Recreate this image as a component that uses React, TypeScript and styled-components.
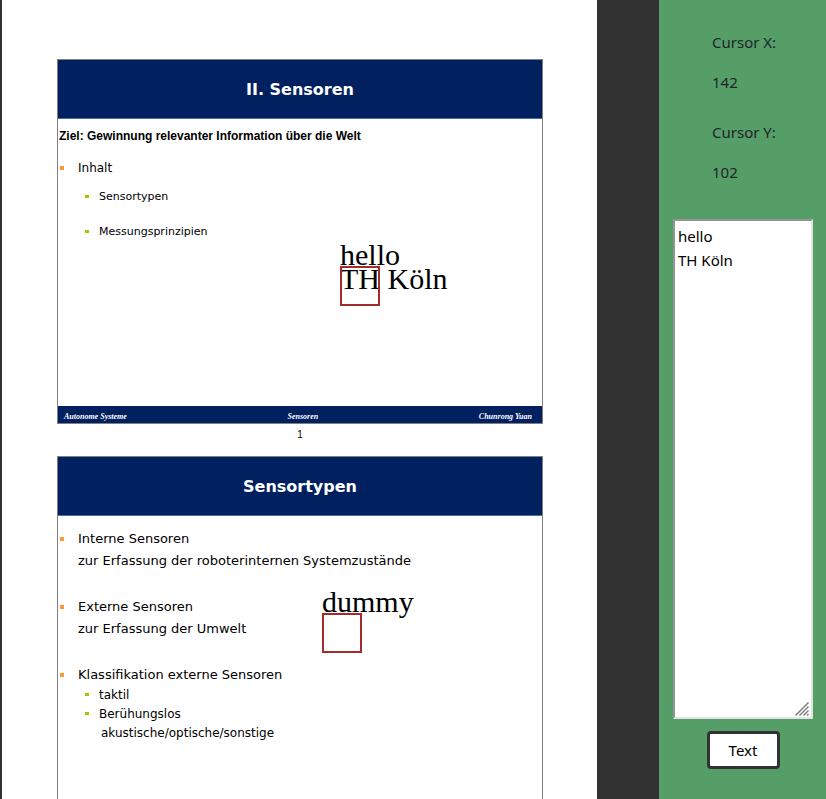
import React, { useState } from "react";
import styled, { createGlobalStyle } from "styled-components";

const GlobalStyle = createGlobalStyle`
  * { box-sizing: border-box; }
  body { margin: 0; background: #323232; }
  p, h1, h2, ul { margin: 0; padding: 0; }
`;

const uiFont = `"Noto Sans", "Open Sans", sans-serif`;
const slideFont = `"DejaVu Sans", Verdana, sans-serif`;

const Shell = styled.div`
  display: flex;
  height: 100vh;
  overflow: hidden;
  background: #323232;
`;

const Viewer = styled.main`
  flex: 1;
  min-width: 0;
  overflow: hidden;
  padding-left: 2px;
`;

const Sheet = styled.article`
  position: relative;
  width: 595px;
  min-height: 842px;
  padding: 59px 54px 0 55px;
  background: #ffffff;
  color: #000000;
`;

const Slide = styled.section`
  display: flex;
  flex-direction: column;
  height: 365px;
  border: 1px solid #808080;
  font-family: ${slideFont};
`;

const SlideTitle = styled.h2`
  display: flex;
  align-items: center;
  justify-content: center;
  height: 59px;
  flex: none;
  padding-top: 2px;
  border-bottom: 1px solid #4a6f9c;
  background: #00205f;
  color: #ffffff;
  font-size: 16px;
  line-height: 20px;
  font-weight: bold;
`;

const Goal = styled.p`
  padding: 8px 1px 0;
  font: bold 12px/18px "Liberation Sans", Arial, sans-serif;
`;

const List = styled.ul<{ $top: number }>`
  display: flex;
  flex-direction: column;
  padding-top: ${(p) => p.$top}px;
  list-style: none;
`;

const Item = styled.li<{ $level: 1 | 2; $size: number; $line: number; $gap?: number }>`
  display: grid;
  grid-template-columns: ${(p) => (p.$level === 1 ? 18 : 14)}px 1fr;
  margin-left: ${(p) => (p.$level === 1 ? 2 : 27)}px;
  margin-top: ${(p) => p.$gap ?? 0}px;
  font-size: ${(p) => p.$size}px;
  line-height: ${(p) => p.$line}px;
  white-space: nowrap;

  &::before {
    content: "";
    width: 4px;
    height: ${(p) => (p.$level === 1 ? 4 : 3)}px;
    margin-top: ${(p) => Math.floor(p.$line / 2) - 2}px;
    background: ${(p) => (p.$level === 1 ? "#ff9933" : "#99cc00")};
  }
`;

const Continuation = styled.span`
  display: block;
  padding-left: 2px;
`;

const SlideFooter = styled.footer`
  display: flex;
  justify-content: space-between;
  align-items: center;
  height: 17px;
  margin-top: auto;
  padding: 4px 10px 0 6px;
  background: #00205f;
  color: #ffffff;
  font: italic bold 8px/12px "Liberation Serif", "Times New Roman", serif;
`;

const PageNumber = styled.p`
  height: 32px;
  padding-top: 5px;
  text-align: center;
  font: 10px/12px "Liberation Sans", Arial, sans-serif;
`;

const Note = styled.div<{ $x: number; $y: number }>`
  position: absolute;
  left: ${(p) => p.$x}px;
  top: ${(p) => p.$y}px;
  font: 30px/24px "Liberation Serif", "Times New Roman", serif;
  white-space: pre;
`;

const NoteHandle = styled.span`
  position: absolute;
  left: 0;
  top: 23px;
  width: 40px;
  height: 40px;
  border: 2px solid #a52a2a;
`;

const Sidebar = styled.aside`
  display: flex;
  flex-direction: column;
  width: 167px;
  flex: none;
  padding: 30px 13px 0 14px;
  background: #559e67;
  color: #212529;
  font: 15px/24px ${uiFont};
`;

const Readout = styled.div`
  display: flex;
  flex-direction: column;
  gap: 16px;
  margin: 0 0 26px 39px;
`;

const EditorWrap = styled.div`
  position: relative;
  display: flex;
  margin-top: 9px;
`;

const Editor = styled.textarea`
  width: 100%;
  height: 500px;
  padding: 3px;
  border: 2px solid;
  border-color: #949494 #e3e3e3 #e3e3e3 #949494;
  border-radius: 0;
  outline: none;
  resize: none;
  background: #ffffff;
  color: #000000;
  font: 15px/24px ${uiFont};
`;

const Grip = styled.svg`
  position: absolute;
  right: 2px;
  bottom: 2px;
  pointer-events: none;
`;

const ModeButton = styled.button`
  align-self: center;
  width: 73px;
  height: 38px;
  margin-top: 12px;
  padding: 0;
  border: 3px solid #323232;
  border-radius: 4px;
  background: #ffffff;
  color: #000000;
  font: 15px/24px ${uiFont};
`;

export default function App() {
  const [text, setText] = useState("hello\nTH Köln");

  return (
    <>
      <GlobalStyle />
      <Shell>
        <Viewer>
          <Sheet>
            <Slide>
              <SlideTitle>II. Sensoren</SlideTitle>
              <Goal>Ziel: Gewinnung relevanter Information über die Welt</Goal>
              <List $top={14}>
                <Item $level={1} $size={12} $line={18}>Inhalt</Item>
                <Item $level={2} $size={11} $line={16} $gap={12}>Sensortypen</Item>
                <Item $level={2} $size={11} $line={16} $gap={19}>Messungsprinzipien</Item>
              </List>
              <SlideFooter>
                <span>Autonome Systeme</span>
                <span>Sensoren</span>
                <span>Chunrong Yuan</span>
              </SlideFooter>
            </Slide>
            <PageNumber>1</PageNumber>
            <Slide>
              <SlideTitle>Sensortypen</SlideTitle>
              <List $top={12}>
                <Item $level={1} $size={13} $line={22}>
                  <span>
                    Interne Sensoren
                    <br />
                    zur Erfassung der roboterinternen Systemzustände
                  </span>
                </Item>
                <Item $level={1} $size={13} $line={22} $gap={24}>
                  <span>
                    Externe Sensoren
                    <br />
                    zur Erfassung der Umwelt
                  </span>
                </Item>
                <Item $level={1} $size={13} $line={22} $gap={24}>Klassifikation externe Sensoren</Item>
                <Item $level={2} $size={12} $line={19}>taktil</Item>
                <Item $level={2} $size={12} $line={19}>
                  <span>
                    Berühungslos
                    <Continuation>akustische/optische/sonstige</Continuation>
                  </span>
                </Item>
              </List>
            </Slide>
            <Note $x={338} $y={243}>
              {text}
              <NoteHandle />
            </Note>
            <Note $x={320} $y={590}>
              dummy
              <NoteHandle />
            </Note>
          </Sheet>
        </Viewer>
        <Sidebar>
          <Readout>
            <label htmlFor="cursor-x">Cursor X:</label>
            <output id="cursor-x">142</output>
          </Readout>
          <Readout>
            <label htmlFor="cursor-y">Cursor Y:</label>
            <output id="cursor-y">102</output>
          </Readout>
          <EditorWrap>
            <Editor aria-label="Text" value={text} onChange={(e) => setText(e.target.value)} />
            <Grip width="16" height="16" viewBox="0 0 16 16" stroke="#777777" strokeWidth="1.4" fill="none" aria-hidden="true">
              <path d="M0.500 14.500L13.500 1.500M4.500 14.500L13.500 5.500M8.500 14.500L13.500 9.500M12 14.500L13.500 13" />
            </Grip>
          </EditorWrap>
          <ModeButton type="button">Text</ModeButton>
        </Sidebar>
      </Shell>
    </>
  );
}
